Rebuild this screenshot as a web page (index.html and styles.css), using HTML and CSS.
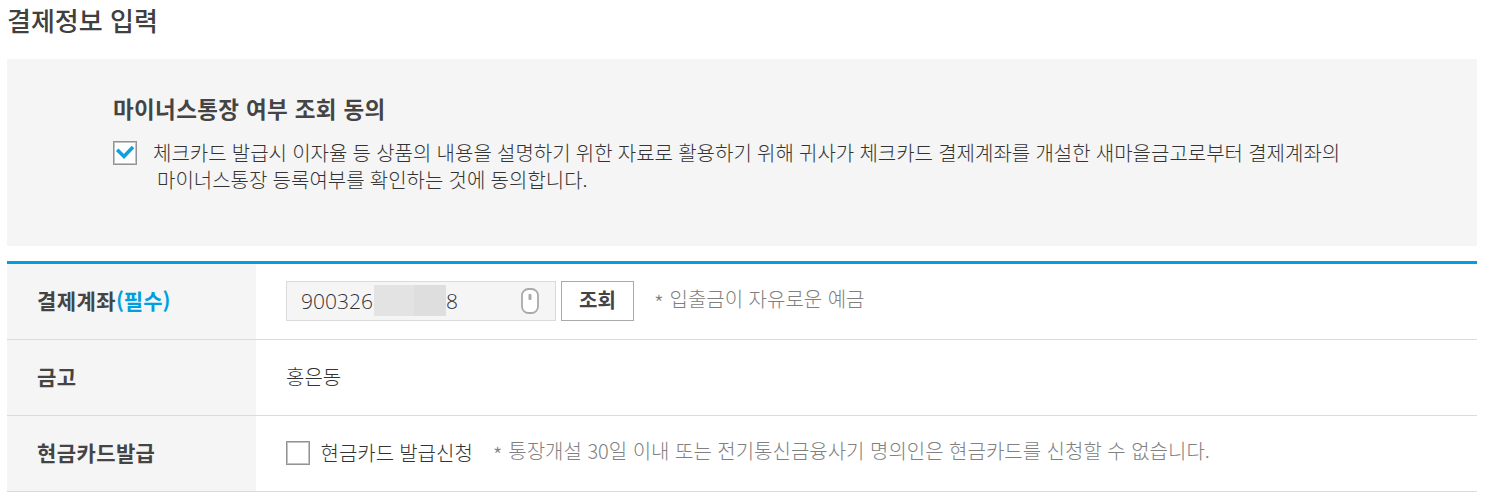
FILE: index.html
```html
<!DOCTYPE html>
<html lang="ko">
<head>
<meta charset="utf-8">
<title>결제정보 입력</title>
<link rel="stylesheet" href="styles.css">
</head>
<body>
<main class="page">
  <h1 class="title">결제정보 입력</h1>
  <section class="consent">
    <h2 class="consent-title">마이너스통장 여부 조회 동의</h2>
    <div class="consent-row">
      <svg class="box" viewBox="0 0 24 24"><rect x=".5" y=".5" width="23" height="23" fill="#fff" stroke="#929397"/><rect x="1.5" y="1.5" width="21" height="21" fill="none" stroke="#c2c3c5"/><path d="M4.2 8.8 L11 15.5 L20 6" fill="none" stroke="#11a0df" stroke-width="3.6"/></svg>
      <p class="consent-text"><span class="line first">체크카드 발급시 이자율 등 상품의 내용을 설명하기 위한 자료로 활용하기 위해 귀사가 체크카드 결제계좌를 개설한 새마을금고로부터 결제계좌의</span><span class="line second">마이너스통장 등록여부를 확인하는 것에 동의합니다.</span></p>
    </div>
  </section>
  <div class="form">
    <div class="row">
      <div class="label">결제계좌<span class="required">(필수)</span></div>
      <div class="cell">
        <div class="field">
          <span class="digits">900326</span><span class="mask"></span><span class="digits last">8</span>
          <svg class="mouse" viewBox="0 0 18 26"><rect x="1" y="1" width="16" height="24" rx="6.5" fill="#fff" stroke="#aaa" stroke-width="1.8"/><rect x="7.5" y="6" width="3" height="6" rx="1" fill="#aaa"/></svg>
        </div>
        <button class="lookup" type="button">조회</button>
        <span class="note"><span class="star">*</span>입출금이 자유로운 예금</span>
      </div>
    </div>
    <div class="row">
      <div class="label">금고</div>
      <div class="cell"><span class="value">홍은동</span></div>
    </div>
    <div class="row">
      <div class="label">현금카드발급</div>
      <div class="cell">
        <svg class="box" viewBox="0 0 24 24"><rect x=".5" y=".5" width="23" height="23" fill="#fff" stroke="#929397"/><rect x="1.5" y="1.5" width="21" height="21" fill="none" stroke="#c2c3c5"/></svg>
        <span class="value check-label">현금카드 발급신청</span>
        <span class="note"><span class="star">*</span>통장개설 30일 이내 또는 전기통신금융사기 명의인은 현금카드를 신청할 수 없습니다.</span>
      </div>
    </div>
  </div>
</main>
</body>
</html>
```
FILE: styles.css
```css
* { box-sizing: border-box; }
body {
  margin: 0;
  background: #fff;
  color: #333;
  font-family: "Noto Sans CJK KR", sans-serif;
  font-size: 20px;
  font-weight: 300;
  line-height: 28px;
  white-space: nowrap;
}
h1, h2, p { margin: 0; }
.page { width: 1477px; padding-left: 7px; }
.title { height: 59px; padding-top: 2px; color: #404040; font-size: 26px; font-weight: 500; line-height: 36px; }
.consent { height: 187px; margin-bottom: 15px; padding: 34px 0 0 106px; background: #f5f5f5; }
.consent-title { color: #444; font-size: 22.5px; font-weight: 700; line-height: 30px; letter-spacing: 0.35px; }
.consent-row { display: flex; padding-top: 16px; }
.box { display: block; flex: none; width: 24px; height: 24px; }
.consent-row .box { margin-top: 2px; }
.consent-text { padding-left: 16px; line-height: 27px; }
.line { display: block; word-spacing: -0.4px; }
.second { padding-left: 4px; }
.form { border-top: 3px solid #009fdf; }
.row { display: flex; height: 76px; border-bottom: 1px solid #dadbdb; }
.label { width: 249px; padding: 22px 0 0 30px; background: #f5f5f5; color: #444; font-size: 21px; font-weight: 700; letter-spacing: 0.4px; }
.required { color: #009fdf; letter-spacing: 0; }
.cell { display: flex; align-items: center; padding: 0 0 2px 30px; }
.field { display: flex; align-items: center; width: 270px; height: 40px; padding: 0 16px 0 14px; background: #f5f5f5; border: 1px solid #dadada; }
.digits { font-family: "Open Sans", "Noto Sans", sans-serif; font-size: 21px; font-weight: 300; }
.mask { width: 72px; height: 31px; margin: 0 0 1px 1px; background: linear-gradient(90deg, #e3e3e3 40px, #dedede 40px); }
.mouse { width: 18px; height: 26px; margin-left: auto; }
.lookup { width: 73px; height: 40px; margin-left: 5px; padding: 0 0 3px; background: #fff; border: 1px solid #a8abab; color: #444; font: 700 20px "Noto Sans CJK KR", sans-serif; }
.note { padding: 0 0 3px 20px; color: #808080; word-spacing: -0.1px; }
.star { display: inline-block; width: 15.5px; height: 20px; font-size: 22px; line-height: 28px; vertical-align: -5px; }
.check-label { padding-left: 10.5px; word-spacing: -0.5px; }
```
